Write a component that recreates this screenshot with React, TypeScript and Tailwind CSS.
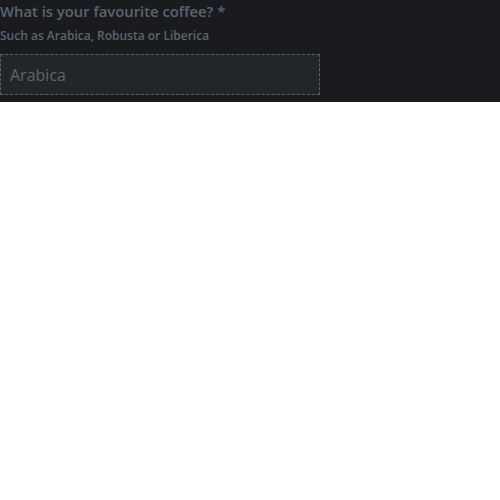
export default function App() {
  return (
    <div className="w-[500px] bg-[#1a1b1f] pb-[7px]" style={{ fontFamily: '"Open Sans", "Noto Sans", sans-serif' }}>
      <label className="block text-[14.8px] leading-[22px] font-semibold text-[#5b6470]">
        What is your favourite coffee? *
      </label>
      <div className="mt-[4px] text-[12px] leading-[20px] font-semibold text-[#5b6470]">
        Such as Arabica, Robusta or Liberica
      </div>
      <input
        className="mt-[8px] block w-[320px] h-[41px] px-[9px] bg-[#232629] border border-dashed border-[#5b6066] text-[16px] text-[#5f656c] placeholder-[#5f656c] outline-none"
        placeholder="Arabica"
      />
    </div>
  );
}
